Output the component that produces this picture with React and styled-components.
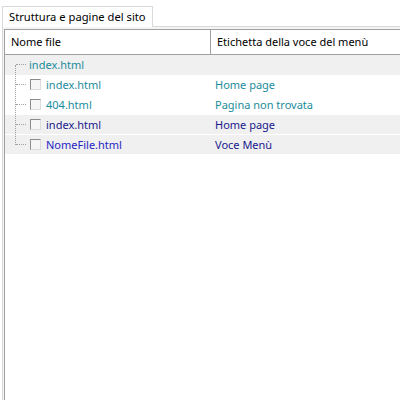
import styled, { createGlobalStyle } from 'styled-components'

const GlobalStyle = createGlobalStyle`
  html, body {
    margin: 0;
    padding: 0;
    background: #ffffff;
    font-family: "Noto Sans", "Liberation Sans", sans-serif;
    font-size: 11px;
  }
`

const files = [
  { name: 'index.html', label: 'Home page', tone: 'teal', shade: false },
  { name: '404.html', label: 'Pagina non trovata', tone: 'teal', shade: false },
  { name: 'index.html', label: 'Home page', tone: 'navy', shade: true },
  { name: 'NomeFile.html', label: 'Voce Menù', tone: 'navy', nameTone: 'blue', shade: true, gap: true },
]

const colors = {
  teal: '#1a8c9c',
  navy: '#18188e',
  blue: '#2525c4',
}

export default function App() {
  return (
    <Wrapper>
      <GlobalStyle />
      <TabStrip>
        <Tab>Struttura e pagine del sito</Tab>
        <TabFill />
      </TabStrip>
      <TabPage>
        <ListView>
          <Header>
            <HeaderCell $width="206px">Nome file</HeaderCell>
            <HeaderCell $last>Etichetta della voce del menù</HeaderCell>
          </Header>
          <Body>
            <TreeLine />
            <Row $shade>
              <NameCell>
                <Branch />
                <Name $tone="teal">index.html</Name>
              </NameCell>
            </Row>
            {files.map((f, i) => (
              <Row key={i} $shade={f.shade} $gap={f.gap}>
                <NameCell>
                  <Branch />
                  <Check />
                  <Name $tone={f.nameTone || f.tone}>{f.name}</Name>
                </NameCell>
                <LabelCell $tone={f.tone}>{f.label}</LabelCell>
              </Row>
            ))}
          </Body>
        </ListView>
      </TabPage>
    </Wrapper>
  )
}

const Wrapper = styled.div`
  display: flex;
  flex-direction: column;
  height: 400px;
  width: 400px;
  padding: 6px 0 0 2px;
  box-sizing: border-box;
  overflow: hidden;
`

const TabStrip = styled.div`
  display: flex;
  align-items: flex-end;
  height: 21px;
`

const Tab = styled.div`
  height: 21px;
  box-sizing: border-box;
  padding: 1px 6px 0 6px;
  border: 1px solid #d9d9d9;
  border-bottom: none;
  background: #ffffff;
  color: #000000;
  font-size: 11.2px;
  line-height: 17px;
  white-space: nowrap;
`

const TabFill = styled.div`
  flex: 1;
  border-bottom: 1px solid #d9d9d9;
`

const TabPage = styled.div`
  flex: 1;
  display: flex;
  border-left: 1px solid #d9d9d9;
  padding: 2px 0 0 1px;
  background: #f4f4f4;
`

const ListView = styled.div`
  flex: 1;
  display: flex;
  flex-direction: column;
  background: #ffffff;
  border-left: 1px solid #a0a0a0;
  border-top: 1px solid #a0a0a0;
`

const Header = styled.div`
  display: flex;
  height: 24px;
  border-bottom: 1px solid #a0a0a0;
  background: #ffffff;
`

const HeaderCell = styled.div`
  display: flex;
  align-items: center;
  box-sizing: border-box;
  padding: 0 0 1px 6px;
  width: ${p => p.$width || 'auto'};
  flex: ${p => (p.$last ? 1 : 'none')};
  border-right: ${p => (p.$last ? 'none' : '1px solid #a0a0a0')};
  color: #000000;
  white-space: nowrap;
`

const Body = styled.div`
  position: relative;
  display: flex;
  flex-direction: column;
`

const TreeLine = styled.div`
  position: absolute;
  left: 10px;
  top: 10px;
  height: 80px;
  border-left: 1px dotted #a0a0a0;
`

const Row = styled.div`
  display: flex;
  align-items: center;
  box-sizing: border-box;
  height: 20px;
  padding-bottom: 1px;
  background: ${p => (p.$shade ? '#f0f0f0' : '#ffffff')};
  border-top: ${p => (p.$gap ? '1px solid #ffffff' : 'none')};
  margin-top: ${p => (p.$gap ? '-1px' : '0')};
`

const NameCell = styled.div`
  display: flex;
  align-items: center;
  box-sizing: border-box;
  width: 207px;
  padding-left: 10px;
`

const Branch = styled.span`
  width: 10px;
  margin-left: 1px;
  border-top: 1px dotted #a0a0a0;
  margin-right: 3px;
`

const Check = styled.span`
  width: 11px;
  height: 11px;
  box-sizing: border-box;
  border: 1px solid;
  border-color: #8c8c8c #dcdcdc #dcdcdc #8c8c8c;
  background: #f6f6f6;
  margin: 0 5px 0 1px;
`

const Name = styled.span`
  color: ${p => colors[p.$tone]};
  white-space: nowrap;
`

const LabelCell = styled.div`
  padding-left: 3px;
  color: ${p => colors[p.$tone]};
  white-space: nowrap;
`
